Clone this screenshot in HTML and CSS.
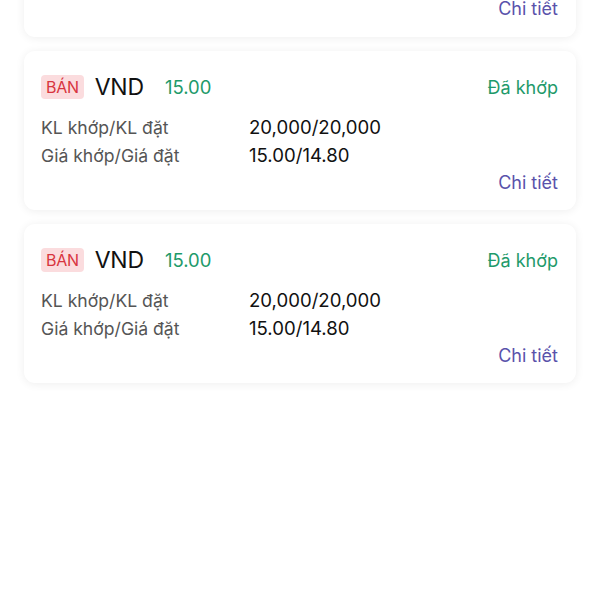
FILE: index.html
```html
<!DOCTYPE html>
<html lang="vi">
<head>
<meta charset="utf-8">
<link rel="stylesheet" href="styles.css">
</head>
<body>
<div class="list">
  <div class="card partial">
    <div class="foot"><a class="detail">Chi tiết</a></div>
  </div>
  <div class="card">
    <div class="head">
      <span class="badge">BÁN</span>
      <span class="sym">VND</span>
      <span class="price">15.00</span>
      <span class="status">Đã khớp</span>
    </div>
    <div class="row"><span class="label">KL khớp/KL đặt</span><span class="val">20,000/20,000</span></div>
    <div class="row"><span class="label">Giá khớp/Giá đặt</span><span class="val">15.00/14.80</span></div>
    <div class="foot"><a class="detail">Chi tiết</a></div>
  </div>
  <div class="card">
    <div class="head">
      <span class="badge">BÁN</span>
      <span class="sym">VND</span>
      <span class="price">15.00</span>
      <span class="status">Đã khớp</span>
    </div>
    <div class="row"><span class="label">KL khớp/KL đặt</span><span class="val">20,000/20,000</span></div>
    <div class="row"><span class="label">Giá khớp/Giá đặt</span><span class="val">15.00/14.80</span></div>
    <div class="foot"><a class="detail">Chi tiết</a></div>
  </div>
</div>
</body>
</html>
```
FILE: styles.css
```css
* { box-sizing: border-box; }
html, body { margin: 0; padding: 0; background: #ffffff; }
body {
  font-family: Inter, "Open Sans", "Liberation Sans", sans-serif;
  color: #111;
  width: 600px;
  height: 600px;
  overflow: hidden;
}
.list {
  display: flex;
  flex-direction: column;
  gap: 14px;
  padding: 0 24px;
  margin-top: -20px;
}
.card {
  background: #fff;
  border-radius: 11px;
  box-shadow: 0 1px 10px rgba(0, 0, 0, 0.07);
  padding: 22px 18px 15px 17px;
  height: 159px;
}
.card.partial {
  height: 57px;
  padding-top: 0;
  display: flex;
  flex-direction: column;
  justify-content: flex-end;
}
.head {
  display: flex;
  align-items: center;
  height: 28px;
}
.badge {
  background: #fbdcde;
  color: #d8353f;
  font-size: 16px;
  line-height: 24px;
  padding: 0 5px;
  border-radius: 4px;
  letter-spacing: -0.3px;
}
.sym {
  font-size: 23px;
  margin-left: 11px;
  color: #111;
  letter-spacing: -0.2px;
}
.price {
  font-size: 18.5px;
  color: #1e9a6a;
  margin-left: 21px;
}
.status {
  margin-left: auto;
  font-size: 18px;
  color: #1e9a6a;
}
.row {
  display: flex;
  height: 28px;
  align-items: center;
  font-size: 17.6px;
}
.head + .row { margin-top: 12px; }
.label {
  width: 208px;
  color: #555;
}
.val {
  color: #111;
  font-size: 18.6px;
}
.foot {
  display: flex;
  justify-content: flex-end;
  height: 27px;
  align-items: center;
}
.detail {
  color: #5a52ab;
  font-size: 18px;
}
```
